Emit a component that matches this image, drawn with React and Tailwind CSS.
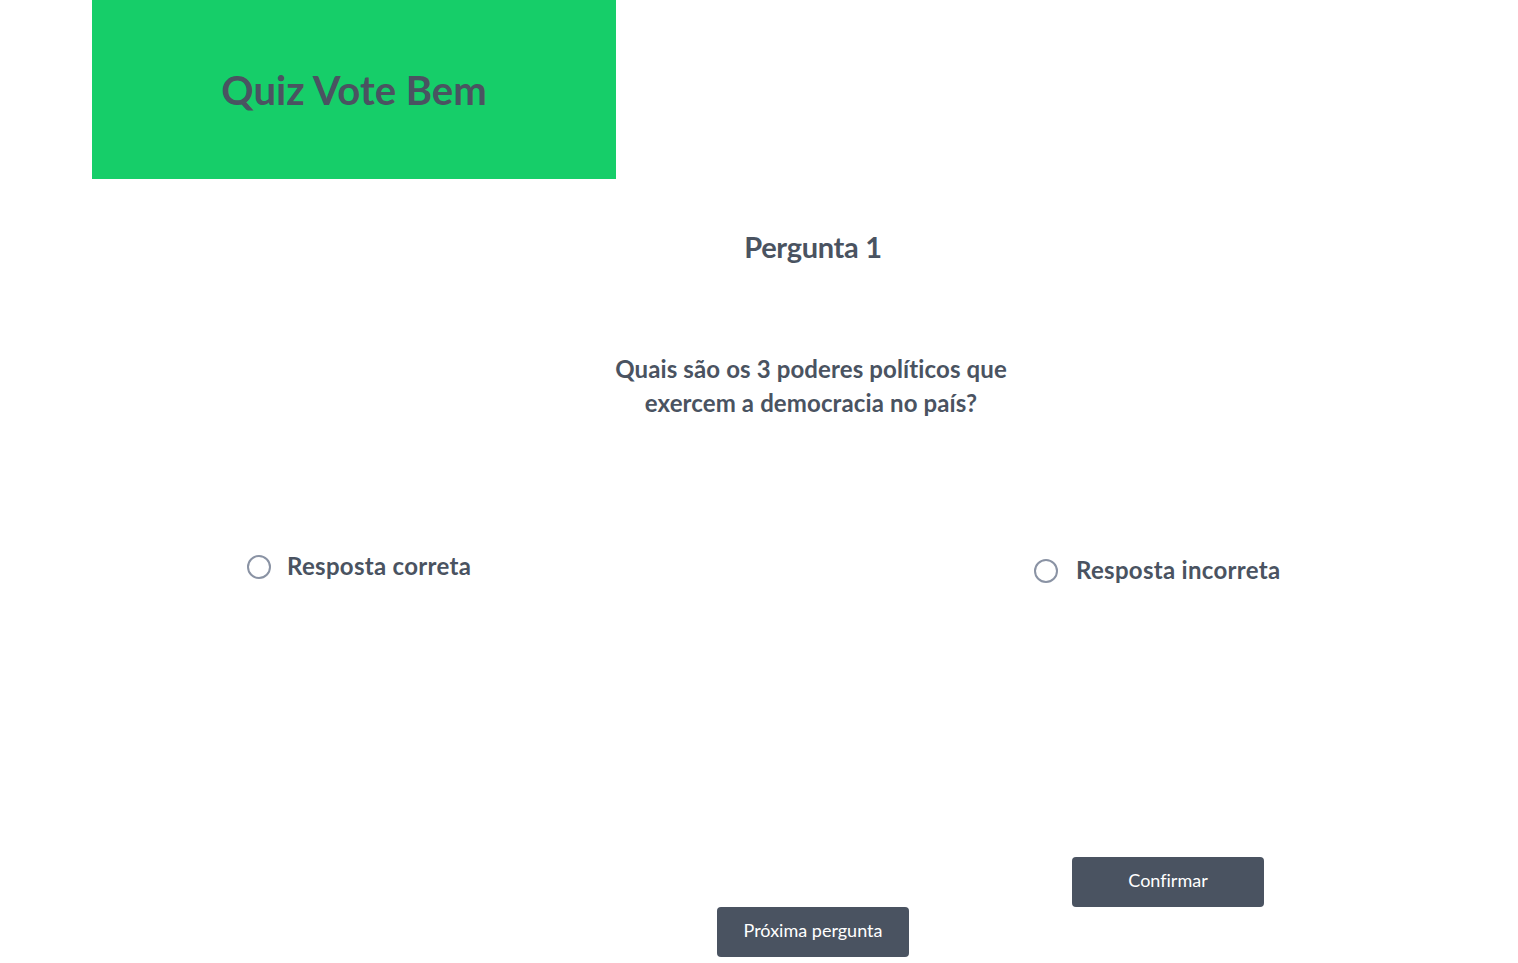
export default function App() {
  return (
    <div className="min-h-screen bg-white text-[#4a5361] [font-variant-ligatures:none]" style={{ fontFamily: "Lato, 'Noto Sans', sans-serif" }}>
      <header className="ml-[92px] flex h-[179px] w-[524px] items-center justify-center bg-[#16ce69]">
        <h1 className="text-[40px] font-bold leading-[48px]">Quiz Vote Bem</h1>
      </header>

      <div className="flex flex-col items-center pl-[108px]">
        <h2 className="mt-[50px] text-[29px] font-bold leading-[36px] tracking-[-0.3px]">Pergunta 1</h2>
        <p className="mt-[87px] mr-[4px] w-[420px] text-center text-[24px] font-bold leading-[34px] tracking-[0.12px]">
          Quais são os 3 poderes políticos que exercem a democracia no país?
        </p>
      </div>

      <div className="mt-[127px] flex items-start">
        <label className="flex w-[1034px] items-start gap-4 pl-[247px]">
          <span className="mt-[8px] h-6 w-6 rounded-full border-2 border-[#8a93a4]"></span>
          <span className="mt-[3px] text-[24px] font-bold leading-[32px] tracking-[0.3px]">Resposta correta</span>
        </label>
        <label className="mt-[4px] flex items-start gap-[18px]">
          <span className="mt-[8px] h-6 w-6 rounded-full border-2 border-[#8a93a4]"></span>
          <span className="mt-[3px] text-[24px] font-bold leading-[32px] tracking-[0.3px]">Resposta incorreta</span>
        </label>
      </div>

      <div className="ml-[1072px] mt-[271px]">
        <button className="h-[50px] w-[192px] rounded-[4px] bg-[#4a5361] pb-[3px] text-[18px] text-white">Confirmar</button>
      </div>
      <div className="flex justify-center pl-[108px]">
        <button className="h-[50px] w-[192px] rounded-[4px] bg-[#4a5361] pb-[3px] text-[18px] text-white">Próxima pergunta</button>
      </div>
    </div>
  );
}
